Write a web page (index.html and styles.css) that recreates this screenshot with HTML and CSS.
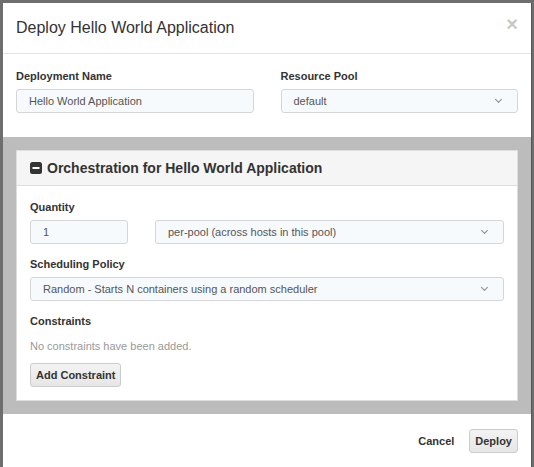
FILE: index.html
```html
<!DOCTYPE html>
<html lang="en">
<head>
    <meta charset="UTF-8">
    <title>Deploy Hello World Application</title>
    <link rel="stylesheet" href="styles.css">
</head>
<body>
    <div class="modal">
        <div class="modal-header">
            <h4 class="modal-title">Deploy Hello World Application</h4>
            <span class="close">&times;</span>
        </div>

        <div class="modal-top">
            <div class="form-group">
                <label>Deployment Name</label>
                <div class="field">Hello World Application</div>
            </div>
            <div class="form-group">
                <label>Resource Pool</label>
                <div class="field select">default</div>
            </div>
        </div>

        <div class="well">
            <div class="panel">
                <div class="panel-heading">
                    <svg class="toggle" width="12" height="12" viewBox="0 0 12 12">
                        <rect x="0" y="0" width="12" height="12" rx="2.5" fill="#333"/>
                        <rect x="2.5" y="5" width="7" height="2" fill="#fff"/>
                    </svg>
                    <span>Orchestration for Hello World Application</span>
                </div>
                <div class="panel-body">
                    <label>Quantity</label>
                    <div class="quantity-row">
                        <div class="field">1</div>
                        <div class="field select">per-pool (across hosts in this pool)</div>
                    </div>

                    <label>Scheduling Policy</label>
                    <div class="field select">Random - Starts N containers using a random scheduler</div>

                    <label>Constraints</label>
                    <p class="empty">No constraints have been added.</p>
                    <button class="btn">Add Constraint</button>
                </div>
            </div>
        </div>

        <div class="modal-footer">
            <a class="link">Cancel</a>
            <button class="btn">Deploy</button>
        </div>
    </div>
</body>
</html>
```

FILE: styles.css
```css
body {
    margin: 0;
    background-color: #6e6e6e;
    font-family: 'Liberation Sans', Arial, sans-serif;
    color: #333;
}
.modal {
    margin: 3px 0 0 3px;
    width: 528px;
    height: 464px;
    background-color: #fff;
    border-right: 1px solid #555;
    display: flex;
    flex-direction: column;
}
.modal-header {
    height: 50px;
    padding: 0 13px;
    border-bottom: 1px solid #e5e5e5;
    display: flex;
    align-items: center;
    justify-content: space-between;
}
.modal-title {
    margin: 0;
    font-size: 16px;
    font-weight: normal;
    color: #333;
}
.close {
    font-size: 20px;
    font-weight: bold;
    color: #c8c8c8;
    margin-top: -8px;
}
.modal-top {
    display: grid;
    grid-template-columns: 1fr 1fr;
    gap: 27px;
    padding: 15px 13px 24px 13px;
}
label {
    display: block;
    font-size: 11px;
    font-weight: bold;
    line-height: 15px;
    margin-bottom: 5px;
    color: #333;
}
.field {
    height: 22px;
    line-height: 22px;
    padding: 0 12px;
    border: 1px solid #d6d6d6;
    border-radius: 3px;
    background-color: #f6fafd;
    font-size: 11px;
    color: #555;
    position: relative;
}
.select::after {
    content: '';
    position: absolute;
    right: 16px;
    top: 7px;
    width: 4px;
    height: 4px;
    border-right: 1px solid #888;
    border-bottom: 1px solid #888;
    transform: rotate(45deg);
}
.well {
    background-color: #bcbcbc;
    padding: 13px;
}
.panel {
    background-color: #fff;
    border: 1px solid #ddd;
}
.panel-heading {
    height: 34px;
    padding: 0 13px;
    background-color: #f5f5f5;
    border-bottom: 1px solid #ddd;
    display: flex;
    align-items: center;
    gap: 5px;
    font-size: 14px;
    font-weight: bold;
}
.panel-body {
    padding: 14px 13px 13px 13px;
}
.panel-body .field {
    margin-bottom: 13px;
}
.quantity-row {
    display: grid;
    grid-template-columns: 98px 1fr;
    gap: 27px;
}
.empty {
    margin: 10px 0 9px 0;
    font-size: 11px;
    line-height: 15px;
    color: #999;
}
.btn {
    font-family: 'Liberation Sans', Arial, sans-serif;
    font-size: 11px;
    font-weight: bold;
    color: #333;
    height: 24px;
    padding: 0 5px;
    border: 1px solid #ccc;
    border-radius: 3px;
    background: linear-gradient(#f3f3f3, #e6e6e6);
}
.modal-footer {
    flex: 1;
    display: flex;
    justify-content: flex-end;
    align-items: center;
    gap: 15px;
    padding: 0 13px;
}
.link {
    font-size: 11px;
    font-weight: bold;
    color: #333;
}
```
